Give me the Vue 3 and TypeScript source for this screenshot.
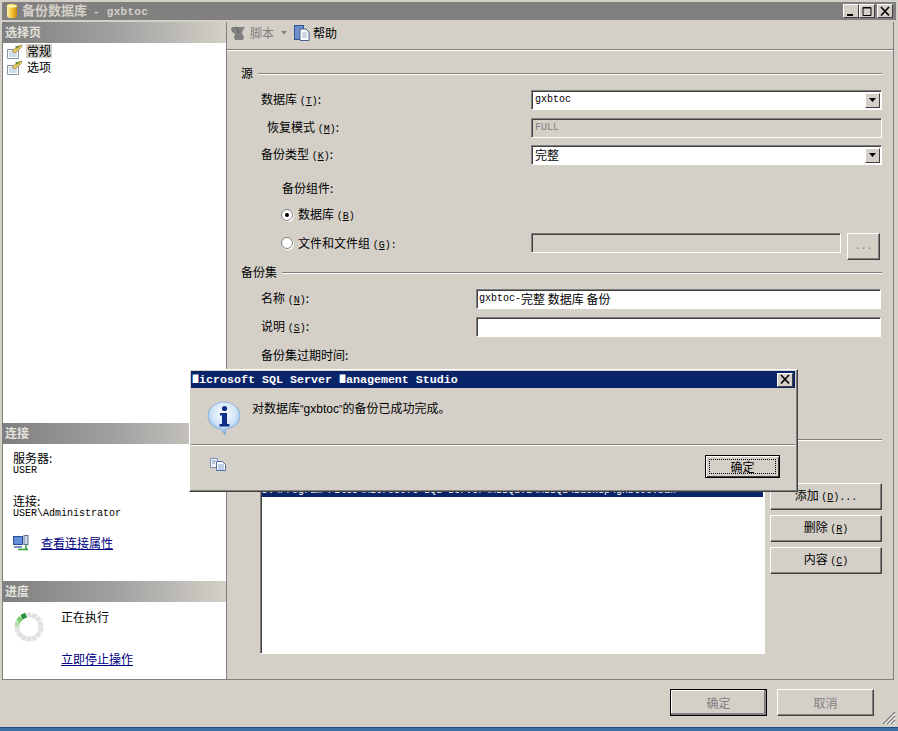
<script setup lang="ts">
interface Seg { x1: number; y1: number; x2: number; y2: number; color: string }
const count = 14
const segs: Seg[] = Array.from({ length: count }, (_, i) => {
  const a = (i / count) * Math.PI * 2 - Math.PI / 2
  const color = i === 13 ? '#2f8f3f' : i === 12 ? '#7ccf6c' : i === 11 ? '#b5e0ac' : '#e2e2e2'
  return {
    x1: 15 + Math.cos(a) * 9.5,
    y1: 15 + Math.sin(a) * 9.5,
    x2: 15 + Math.cos(a) * 14.5,
    y2: 15 + Math.sin(a) * 14.5,
    color,
  }
})
const pages = [
  { name: '常规', active: true },
  { name: '选项', active: false },
]
</script>

<template>
  <div class="root">
    <div class="titlebar">
      <svg class="db" width="14" height="16" viewBox="0 0 14 16">
        <defs>
          <linearGradient id="dbg" x1="0" x2="1" y1="0" y2="0">
            <stop offset="0" stop-color="#fff2a8" />
            <stop offset="0.5" stop-color="#f2c230" />
            <stop offset="1" stop-color="#c98a10" />
          </linearGradient>
        </defs>
        <path d="M2 3c0-3 10-3 10 0v10c0 3-10 3-10 0z" fill="url(#dbg)" />
        <ellipse cx="7" cy="3" rx="5" ry="1.6" fill="#fff3b0" />
      </svg>
      <span class="title-text">备份数据库 <span class="title-lat">- gxbtoc</span></span>
      <div class="title-btns">
        <span class="cap"><svg width="14" height="13" viewBox="0 0 14 13"><rect x="3" y="9" width="6" height="2" fill="#000" /></svg></span>
        <span class="cap"><svg width="14" height="13" viewBox="0 0 14 13"><path d="M3 2.500h8v8H3z" fill="none" stroke="#000" /><path d="M3 3h8" stroke="#000" /></svg></span>
        <span class="cap close"><svg width="14" height="13" viewBox="0 0 14 13"><path d="M3 2l8 8.500M11 2l-8 8.500" stroke="#000" stroke-width="1.7" fill="none" /></svg></span>
      </div>
    </div>

    <div class="main">
      <aside class="side">
        <div class="head">选择页</div>
        <ul class="pages">
          <li v-for="p in pages" :key="p.name" class="page">
            <svg width="17" height="15" viewBox="0 0 17 15">
              <path d="M1.500 5.500h11v9h-11z" fill="#fff" stroke="#8a94a8" />
              <path d="M3 8h8M3 10h8M3 12h8" stroke="#9fb4d0" />
              <path d="M6 7l6-5 4-1-1 3-6 5z" fill="#e8c860" stroke="#8a7a30" stroke-width=".6" />
              <path d="M9 2l5 0-3 3z" fill="#6f8f3f" />
            </svg>
            <span class="page-name" :class="{ active: p.active }">{{ p.name }}</span>
          </li>
        </ul>

        <div class="head">连接</div>
        <div class="conn">
          <div class="cjk-line">服务器:</div>
          <div class="mono-line">USER</div>
          <div class="cjk-line conn-gap">连接:</div>
          <div class="mono-line">USER\Administrator</div>
          <div class="link-row">
            <svg width="17" height="16" viewBox="0 0 17 16">
              <rect x="0.5" y="1.5" width="9" height="8" fill="#5f8fd8" stroke="#2a4f98" />
              <rect x="11" y="0.5" width="4" height="9" fill="#d0d8e8" stroke="#607090" />
              <path d="M1 11h8v2H1z" fill="#7f93b8" />
              <path d="M5 14.500h10M13 10v4.500" stroke="#2f9a3a" stroke-width="1.4" fill="none" />
            </svg>
            <a class="link">查看连接属性</a>
          </div>
        </div>

        <div class="head">进度</div>
        <div class="prog">
          <svg class="spin" width="30" height="30" viewBox="0 0 30 30">
            <line
              v-for="(s, i) in segs"
              :key="i"
              :x1="s.x1"
              :y1="s.y1"
              :x2="s.x2"
              :y2="s.y2"
              :stroke="s.color"
              stroke-width="5"
            />
          </svg>
          <div class="prog-text">
            <div class="cjk-line">正在执行</div>
            <a class="link stop">立即停止操作</a>
          </div>
        </div>
      </aside>

      <section class="pane">
        <div class="toolbar">
          <svg width="17" height="15" viewBox="0 0 17 15">
            <path d="M2 1h13l-2 3-1 3 2 4-1 3H5l-1-3 1-3-3-2-1-3z" fill="#808080" />
            <path d="M5 1c3 1 4 3 3 6" stroke="#555" fill="none" />
          </svg>
          <span class="tool-txt muted">脚本</span>
          <svg class="drop" width="6" height="4" viewBox="0 0 6 4"><path d="M0 0h6L3 3.500z" fill="#808080" /></svg>
          <svg class="help-ic" width="16" height="16" viewBox="0 0 16 16">
            <rect x="0.5" y="0.5" width="9" height="14" fill="#6f8fc8" stroke="#33549a" />
            <path d="M6 4h6l3 3v8.500H6z" fill="#fff" stroke="#46618f" />
            <path d="M8 8h5M8 10h5M8 12h5" stroke="#9fb0cf" />
          </svg>
          <span class="tool-txt">帮助</span>
        </div>

        <div class="form">
          <div class="sec"><span>源</span><i class="rule" /></div>

          <div class="row r1">
            <span class="lbl lbl-a">数据库 <span class="m">(<u>T</u>)</span>:</span>
            <div class="combo wide">
              <span class="m val">gxbtoc</span>
              <span class="arrow"><svg width="7" height="4" viewBox="0 0 7 4"><path d="M0 0h7L3.500 4z" fill="#000" /></svg></span>
            </div>
          </div>
          <div class="row r2">
            <span class="lbl lbl-b">恢复模式 <span class="m">(<u>M</u>)</span>:</span>
            <div class="field wide disabled"><span class="m grey">FULL</span></div>
          </div>
          <div class="row r3">
            <span class="lbl lbl-a">备份类型 <span class="m">(<u>K</u>)</span>:</span>
            <div class="combo wide">
              <span class="val">完整</span>
              <span class="arrow"><svg width="7" height="4" viewBox="0 0 7 4"><path d="M0 0h7L3.500 4z" fill="#000" /></svg></span>
            </div>
          </div>

          <div class="line16 comp">备份组件:</div>

          <div class="radio-row r-db">
            <span class="radio on"><i /></span>
            <span>数据库 <span class="m">(<u>B</u>)</span></span>
          </div>
          <div class="radio-row r-file">
            <span class="radio" />
            <span class="file-lbl">文件和文件组 <span class="m">(<u>G</u>):</span></span>
            <div class="field file-field disabled" />
            <span class="btn dots"><span>...</span></span>
          </div>

          <div class="sec sec2"><span>备份集</span><i class="rule" /></div>

          <div class="row r1">
            <span class="lbl lbl-n">名称 <span class="m">(<u>N</u>)</span>:</span>
            <div class="field grow"><span class="m">gxbtoc-</span>完整 数据库 备份</div>
          </div>
          <div class="row r2">
            <span class="lbl lbl-n">说明 <span class="m">(<u>S</u>)</span>:</span>
            <div class="field grow" />
          </div>
          <div class="line16 expire">备份集过期时间:</div>

          <div class="sec sec3"><span>目标</span><i class="rule" /></div>

          <div class="dest">
            <div class="listbox">
              <div class="sel m">D:\Program Files\Microsoft SQL Server\MSSQL.1\MSSQL\Backup\gxbtoc.bak</div>
            </div>
            <div class="dest-btns">
              <span class="btn act"><span>添加 <span class="m">(<u>D</u>)...</span></span></span>
              <span class="btn act"><span>删除 <span class="m">(<u>R</u>)</span></span></span>
              <span class="btn act"><span>内容 <span class="m">(<u>C</u>)</span></span></span>
            </div>
          </div>
        </div>
      </section>
    </div>

    <div class="footer">
      <span class="btn foot default">确定</span>
      <span class="btn foot">取消</span>
      <svg class="grip" width="14" height="14" viewBox="0 0 14 14">
        <path d="M13 1L1 13M13 5L5 13M13 9l-4 4" stroke="#808080" stroke-width="1.2" />
        <path d="M13 3L3 13M13 7l-6 6M13 11l-2 2" stroke="#fff" />
      </svg>
    </div>
    <div class="taskbar" />

    <div class="dialog">
      <div class="dlg-title">
        <span class="dlg-title-text"><span class="blk">■</span>icrosoft SQL Server <span class="blk">■</span>anagement Studio</span>
        <span class="cap dlg-x"><svg width="14" height="13" viewBox="0 0 14 13"><path d="M3 2l8 8.500M11 2l-8 8.500" stroke="#000" stroke-width="1.7" fill="none" /></svg></span>
      </div>
      <div class="dlg-body">
        <svg width="34" height="34" viewBox="0 0 34 34">
          <defs>
            <radialGradient id="ib" cx="0.5" cy="0.35" r="0.7">
              <stop offset="0" stop-color="#ffffff" />
              <stop offset="0.55" stop-color="#cfe3f8" />
              <stop offset="1" stop-color="#5f97d8" />
            </radialGradient>
          </defs>
          <path d="M17 1C8 1 1 7 1 15c0 7 6 13 13 13l4 6 1-6c8-1 14-6 14-13C33 7 26 1 17 1z" fill="url(#ib)" stroke="#7fa7d0" stroke-width=".7" />
          <circle cx="17.5" cy="7.500" r="2.600" fill="#0f2f87" />
          <path d="M13 12h7v11h2.500v2.500h-10V23H15v-8.500h-2z" fill="#0f2f87" />
        </svg>
        <div class="dlg-msg">对数据库<span class="q">"</span><span class="dlg-name">gxbtoc</span><span class="q">"</span>的备份已成功完成。</div>
      </div>
      <i class="dlg-sep" />
      <div class="dlg-foot">
        <svg width="16" height="13" viewBox="0 0 16 13">
          <path d="M0.500 0.500h7v9h-7z" fill="#eef2fa" stroke="#7f93b8" />
          <path d="M6.500 3.500h6l3 3v6h-9z" fill="#fff" stroke="#4f70a8" />
          <path d="M8 7h6M8 9h6M8 11h6" stroke="#7f9fd0" />
          <path d="M2 3h4M2 5h3" stroke="#7f93b8" />
        </svg>
        <span class="dlg-ok"><span>确定</span></span>
      </div>
    </div>
  </div>
</template>

<style>
html, body { margin: 0; background: #d4d0c8; }
</style>

<style scoped>
.root {
  position: relative;
  width: 898px;
  height: 731px;
  overflow: hidden;
  background: #d4d0c8;
  padding-top: 2px;
  box-sizing: border-box;
  display: flex;
  flex-direction: column;
  font: 12px/14px "Noto Sans CJK SC", "Liberation Sans", sans-serif;
  color: #000;
}
.m { font-family: "Liberation Mono", "Noto Sans CJK SC", monospace; font-size: 10px; }
.titlebar {
  height: 18px;
  margin: 0 2px 2px;
  flex: none;
  background: #808080;
  display: flex;
  align-items: center;
  padding-left: 3px;
  color: #d4d0c8;
}
.db { flex: none; }
.title-text { margin-left: 3px; font-size: 13px; font-weight: 700; white-space: pre; }
.title-lat { font-family: "Liberation Mono", monospace; font-size: 11px; margin-left: 3px; letter-spacing: 0.3px; }
.title-btns { margin-left: auto; display: flex; margin-right: 3px; }
.cap {
  width: 16px;
  height: 14px;
  box-sizing: border-box;
  background: #d4d0c8;
  border: 1px solid;
  border-color: #fff #404040 #404040 #fff;
  display: flex;
  align-items: center;
  justify-content: center;
}
.cap svg { flex: none; }
.close { margin-left: 2px; }
.main {
  flex: none;
  height: 658px;
  margin: 0 4px 0 2px;
  box-sizing: border-box;
  border: 1px solid #808080;
  border-top: 0;
  display: flex;
}
.side {
  width: 223px;
  flex: none;
  background: #fff;
  display: flex;
  flex-direction: column;
}
.head {
  height: 21px;
  flex: none;
  line-height: 20px;
  padding-left: 2px;
  font-size: 12px;
  font-weight: 700;
  color: #e4e2dc;
  background: linear-gradient(90deg, #7f7f7f, #a0a0a0 50%, #d4d0c8);
}
.pages { list-style: none; margin: 0; padding: 0 0 0 3px; height: 380px; box-sizing: border-box; flex: none; }
.page { display: flex; align-items: center; height: 16px; gap: 3px; }
.page svg { flex: none; }
.page-name { padding: 0 1px; }
.page-name.active { background: #d4d0c8; }
.conn { height: 137px; flex: none; padding: 7px 0 0 10px; box-sizing: border-box; }
.cjk-line { height: 14px; }
.mono-line { font: 10px/12px "Liberation Mono", monospace; height: 12px; }
.conn-gap { margin-top: 17px; }
.link-row { display: flex; align-items: center; gap: 11px; margin-top: 15px; height: 16px; }
.link { color: #000080; text-decoration: underline; white-space: nowrap; }
.prog { flex: 1; display: flex; padding: 8px 0 0 11px; min-height: 0; }
.spin { flex: none; margin-top: 2px; }
.prog-text { margin-left: 17px; }
.stop { display: block; margin-top: 28px; }
.pane {
  flex: 1;
  min-width: 0;
  border-left: 1px solid #808080;
  display: flex;
  flex-direction: column;
}
.toolbar {
  height: 22px;
  flex: none;
  border-bottom: 1px solid #808080;
  box-shadow: 0 1px 0 #fff;
  display: flex;
  align-items: center;
  padding: 0 0 5px 3px;
  box-sizing: content-box;
}
.tool-txt { margin-left: 3px; }
.muted { color: #808080; margin-left: 3px; }
.drop { margin-left: 7px; }
.help-ic { margin-left: 7px; }
.form { padding: 15px 11px 0 14px; flex: 1; min-height: 0; }
.sec { display: flex; align-items: center; height: 16px; gap: 5px; }
.rule { flex: 1; height: 1px; background: #808080; box-shadow: 0 1px 0 #fff; }
.row { display: flex; align-items: center; height: 20px; }
.r1 { margin-top: 9px; }
.r2 { margin-top: 8px; }
.r3 { margin-top: 7px; }
.lbl { flex: none; white-space: nowrap; }
.lbl-a { width: 290px; padding-left: 20px; box-sizing: border-box; }
.lbl-b { width: 284px; margin-left: 6px; padding-left: 20px; box-sizing: border-box; }
.lbl-n { width: 235px; padding-left: 20px; box-sizing: border-box; }
.combo, .field {
  height: 20px;
  box-sizing: border-box;
  border: 1px solid;
  border-color: #808080 #fff #fff #808080;
  box-shadow: inset 1px 1px #404040;
  background: #fff;
  display: flex;
  align-items: center;
  padding-left: 3px;
  white-space: pre;
}
.wide { width: 351px; flex: none; }
.grow { width: 405px; flex: none; padding-left: 2px; }
.val { flex: 1; }
.arrow {
  width: 15px;
  height: 15px;
  margin-right: 1px;
  background: #d4d0c8;
  border: 1px solid;
  border-color: #fff #404040 #404040 #fff;
  box-sizing: border-box;
  display: flex;
  align-items: center;
  justify-content: center;
}
.disabled { background: #d4d0c8; }
.grey { color: #808080; }
.line16 { height: 16px; line-height: 16px; }
.comp { margin: 15px 0 0 41px; }
.radio-row { display: flex; align-items: center; }
.r-db { margin: 11px 0 0 40px; height: 16px; gap: 5px; }
.r-file { margin: 10px 0 0 40px; height: 27px; align-items: flex-start; gap: 5px; }
.r-file .radio { margin-top: 4px; }
.file-lbl { width: 228px; margin-top: 3px; flex: none; }
.radio {
  width: 12px;
  height: 12px;
  flex: none;
  border-radius: 50%;
  background: #fff;
  border: 1px solid #808080;
  box-shadow: 1px 1px 0 #fff;
  box-sizing: border-box;
  display: flex;
  align-items: center;
  justify-content: center;
}
.radio i { width: 4px; height: 4px; border-radius: 50%; background: #000; }
.file-field { width: 310px; flex: none; }
.btn {
  background: #d4d0c8;
  border: 1px solid;
  border-color: #fff #404040 #404040 #fff;
  box-shadow: inset -1px -1px #808080;
  box-sizing: border-box;
  display: flex;
  align-items: center;
  justify-content: center;
  white-space: pre;
}
.dots { width: 33px; height: 27px; margin-left: 1px; color: #808080; font: 10px "Liberation Mono", monospace; }
.sec2 { margin-top: 4px; }
.expire { margin: 10px 0 0 20px; }
.sec3 { margin-top: 68px; }
.dest { display: flex; margin: 36px 0 0 19px; gap: 5px; }
.listbox {
  width: 505px;
  height: 171px;
  flex: none;
  box-sizing: border-box;
  background: #fff;
  border: 1px solid;
  border-color: #808080 #fff #fff #808080;
  box-shadow: inset 1px 1px #404040;
  padding: 1px;
}
.sel { background: #0a246a; color: #fff; height: 12px; line-height: 12px; white-space: pre; }
.dest-btns { display: flex; flex-direction: column; gap: 5px; flex: none; width: 112px; }
.act { height: 27px; }
.footer {
  height: 47px;
  flex: none;
  position: relative;
  display: flex;
  justify-content: flex-end;
  gap: 10px;
  padding: 9px 24px 0 0;
  box-sizing: border-box;
}
.foot { width: 97px; height: 27px; color: #808080; }
.default { outline: 1px solid #000; outline-offset: -1px; box-shadow: inset -2px -2px #808080, inset 1px 1px #fff; }
.grip { position: absolute; right: 2px; bottom: 2px; }
.taskbar { height: 4px; flex: none; background: #3a6ea5; border-top: 1px solid #1f4f80; box-sizing: border-box; }
.dialog {
  position: absolute;
  left: 189px;
  top: 369px;
  width: 609px;
  height: 123px;
  box-sizing: border-box;
  background: #d4d0c8;
  border: 1px solid;
  border-color: #fff #404040 #404040 #fff;
  box-shadow: inset -1px -1px #808080;
  padding: 1px 2px 0 1px;
  display: flex;
  flex-direction: column;
}
.dlg-title {
  height: 17px;
  flex: none;
  background: #0a246a;
  color: #fff;
  display: flex;
  align-items: center;
  justify-content: space-between;
  padding: 0 2px 0 1px;
}
.dlg-title-text { font: 700 11.67px/17px "Liberation Mono", monospace; white-space: pre; padding-top: 1px; }
.blk { display: inline-block; width: 7px; transform: scaleY(1.5); }
.dlg-x { width: 16px; height: 14px; }
.dlg-body { display: flex; height: 55px; padding: 13px 0 0 16px; box-sizing: border-box; flex: none; }
.dlg-msg { margin: 0 0 0 11px; white-space: pre; height: 14px; }
.dlg-name { font-family: "Liberation Sans", sans-serif; }
.q { font-family: "Liberation Sans", sans-serif; font-size: 10px; }
.dlg-sep { display: block; flex: none; margin-top: 1px; height: 1px; background: #808080; box-shadow: 0 1px 0 #fff; }
.dlg-foot {
  display: flex;
  justify-content: space-between;
  align-items: flex-start;
  padding: 10px 15px 0 19px;
}
.dlg-foot svg { margin-top: 3px; }
.dlg-ok {
  width: 75px;
  height: 23px;
  box-sizing: border-box;
  border: 1px solid #000;
  background: #d4d0c8;
  box-shadow: inset 1px 1px #fff, inset -1px -1px #404040;
  padding: 3px;
  display: flex;
}
.dlg-ok span {
  flex: 1;
  border: 1px dotted #000;
  text-align: center;
  line-height: 13px;
}
</style>
